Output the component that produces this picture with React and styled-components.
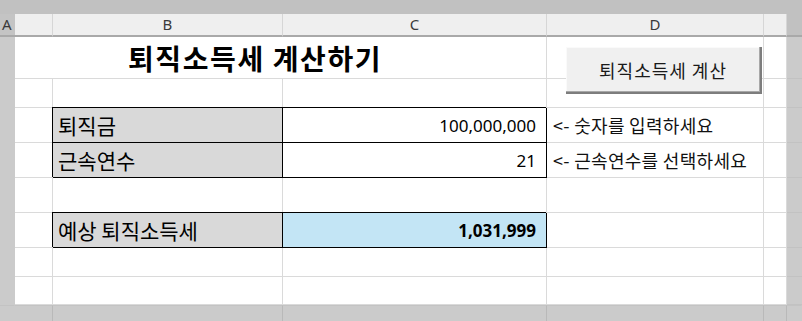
import React from 'react';
import styled, { createGlobalStyle } from 'styled-components';

const GlobalStyle = createGlobalStyle`
  html, body { margin: 0; padding: 0; background: #fff; }
  body { font-family: "Noto Sans CJK KR", "Noto Sans", sans-serif; }
`;

const COLS = '15px 38px 230px 264px 217px 23px 15px';
const KR = '"Noto Sans CJK KR", "Noto Sans", sans-serif';
const NUM = '"Noto Sans", "Noto Sans CJK KR", sans-serif';

const Sheet = styled.div`
  position: relative;
  width: 802px;
  height: 321px;
  overflow: hidden;
  display: flex;
  flex-direction: column;
  background: #fff;
`;

const TopBar = styled.div`
  flex: none;
  height: 14px;
  background: #c1c1c1;
`;

const Row = styled.div`
  flex: none;
  display: grid;
  grid-template-columns: ${COLS};
  height: ${(p) => p.$h}px;
`;

const Corner = styled.div`
  background: #c4c4c4;
  border-bottom: 2px solid #a9a9a9;
  color: #3a3a3a;
  font: 15px/20px "Noto Sans", sans-serif;
  padding-left: 2px;
`;

const ColHead = styled.div`
  background: #efefef;
  border-right: 1px solid #d6d6d6;
  border-bottom: 2px solid #a9a9a9;
  color: #3a3a3a;
  font: 15px/20px "Noto Sans", sans-serif;
  text-align: center;
`;

const ScrollHead = styled.div`
  background: #c1c1c1;
  border-bottom: 2px solid #a9a9a9;
`;

const Strip = styled.div`
  background: #cbcbcb;
`;

const SideStrip = styled.div`
  background: #cbcbcb;
  border-bottom: 1px solid #c2c2c2;
`;

const Cell = styled.div`
  grid-column: span ${(p) => p.$span || 1};
  display: flex;
  align-items: center;
  border-right: 1px solid #dadada;
  border-bottom: 1px solid #dadada;
  min-width: 0;
  white-space: nowrap;
`;

const Title = styled(Cell)`
  padding-left: 113px;
  font: 700 28px/1 ${KR};
  color: #000;
  letter-spacing: 1.6px;
`;

const Hint = styled(Cell)`
  padding-left: 6px;
  font: 18px/1 ${KR};
  color: #111;
  letter-spacing: 0.3px;
`;

const TONES = {
  label: '#d9d9d9',
  value: '#ffffff',
  result: '#c3e5f5',
};

const Box = styled.div`
  display: flex;
  align-items: center;
  justify-content: ${(p) => (p.$tone === 'label' ? 'flex-start' : 'flex-end')};
  padding: ${(p) => (p.$tone === 'label' ? '0 0 0 5px' : '0 10px 0 0')};
  background: ${(p) => TONES[p.$tone]};
  border-right: 1px solid #000;
  border-bottom: 1px solid #000;
  box-shadow: -1px -1px 0 #000;
  color: #000;
  white-space: nowrap;
  font: ${(p) =>
    p.$tone === 'label'
      ? `21px/1 ${KR}`
      : p.$tone === 'result'
      ? `700 17px/1 ${NUM}`
      : `17px/1 ${NUM}`};
`;

const BandCell = styled.div`
  background: #cbcbcb;
  border-top: 1px solid #c3c3c3;
  border-right: 1px solid ${(p) => (p.$edge ? '#cbcbcb' : '#b9b9b9')};
`;

const CalcButton = styled.button`
  position: absolute;
  left: 566px;
  top: 47px;
  width: 196px;
  height: 47px;
  margin: 0;
  padding: 0;
  background: #f0f0f0;
  border: none;
  border-right: 2px solid #7d7d7d;
  border-bottom: 2px solid #7d7d7d;
  box-shadow: inset -1px -1px 0 #a8a8a8, inset 1px 1px 0 #fafafa;
  font: 18px/1 ${KR};
  color: #1a1a1a;
  letter-spacing: 1px;
  cursor: pointer;
`;

const rows = [
  { h: 29, type: 'empty' },
  { h: 35, type: 'data', label: '퇴직금', value: '100,000,000', hint: '<- 숫자를 입력하세요', tone: 'value' },
  { h: 35, type: 'data', label: '근속연수', value: '21', hint: '<- 근속연수를 선택하세요', tone: 'value' },
  { h: 35, type: 'empty' },
  { h: 35, type: 'data', label: '예상 퇴직소득세', value: '1,031,999', hint: '', tone: 'result' },
  { h: 29, type: 'empty' },
  { h: 28, type: 'empty' },
];

export default function App() {
  return (
    <>
      <GlobalStyle />
      <Sheet>
        <TopBar />
        <Row $h={23}>
          <Corner>A</Corner>
          <ColHead />
          <ColHead>B</ColHead>
          <ColHead>C</ColHead>
          <ColHead>D</ColHead>
          <ColHead />
          <ScrollHead />
        </Row>
        <Row $h={42}>
          <Strip />
          <Title $span={3}>퇴직소득세 계산하기</Title>
          <Cell />
          <Cell />
          <SideStrip />
        </Row>
        {rows.map((r, i) =>
          r.type === 'data' ? (
            <Row key={i} $h={r.h}>
              <Strip />
              <Cell />
              <Box $tone="label">{r.label}</Box>
              <Box $tone={r.tone}>{r.value}</Box>
              <Hint>{r.hint}</Hint>
              <Cell />
              <SideStrip />
            </Row>
          ) : (
            <Row key={i} $h={r.h}>
              <Strip />
              <Cell />
              <Cell />
              <Cell />
              <Cell />
              <Cell />
              <SideStrip />
            </Row>
          )
        )}
        <Row $h={16}>
          <BandCell $edge />
          <BandCell />
          <BandCell />
          <BandCell />
          <BandCell />
          <BandCell />
          <BandCell $edge />
        </Row>
        <CalcButton type="button">퇴직소득세 계산</CalcButton>
      </Sheet>
    </>
  );
}
